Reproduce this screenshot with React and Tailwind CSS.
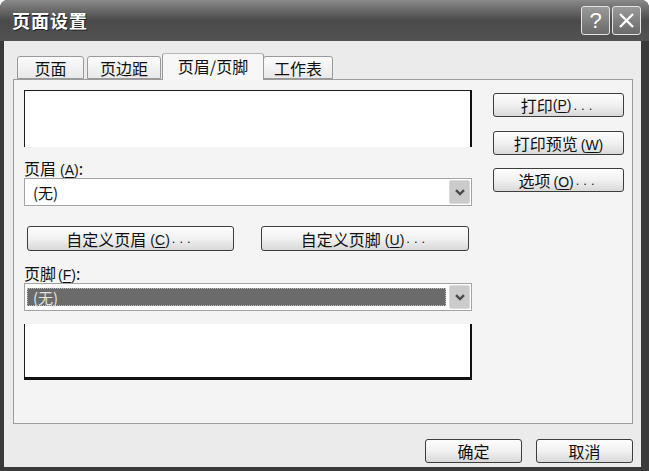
import React from 'react';

const cjk = "font-['Noto_Sans_CJK_SC','Noto_Sans',sans-serif]";

const Key = ({ k }) => (
  <span className="text-[14px] font-['Liberation_Sans',sans-serif]">
    (<span className="underline underline-offset-2">{k}</span>)
  </span>
);

const Dots = () => (
  <span className="text-[13px] tracking-[4px] font-['Liberation_Sans',sans-serif] ml-[2px]">...</span>
);

const XpButton = ({ className = '', children }) => (
  <div
    className={`flex items-center justify-center rounded-[3px] border border-[#3d3d3d] bg-gradient-to-b from-[#fdfdfd] via-[#f1f1f1] to-[#d9d9d9] text-[16px] leading-none text-[#111] ${className}`}
  >
    {children}
  </div>
);

const Chevron = () => (
  <svg width="10" height="7" viewBox="0 0 10 7">
    <path d="M1 1.2 L5 5 L9 1.2" fill="none" stroke="#4a4a4a" strokeWidth="2.4" />
  </svg>
);

const Combo = ({ selected }) => (
  <div className="flex items-center h-[28px] border border-[#a3a3a3] bg-white pl-[2px] pr-[1px]">
    {selected ? (
      <div className="flex-1 h-[18px] flex items-center pl-[5px] bg-[#6b6b6b] border border-dotted border-[#bdbdbd] text-[#e2e2e2] text-[15px] leading-none">
        (无)
      </div>
    ) : (
      <div className="flex-1 pl-[6px] text-[15px] leading-none text-[#111]">(无)</div>
    )}
    <div className="ml-[3px] w-[21px] h-[24px] rounded-[2px] bg-[#cbcbcb] border border-[#dadada] flex items-center justify-center">
      <Chevron />
    </div>
  </div>
);

const Tab = ({ label, width, active, className = '' }) => (
  <div
    className={`flex items-center justify-center rounded-t-[3px] border border-[#9a9a9a] text-[16px] leading-none text-[#111] ${
      active
        ? 'h-[27px] -mb-[1px] border-b-0 bg-[#f7f7f7] border-t-[#b5b5b5] pb-[2px]'
        : 'h-[23px] bg-gradient-to-b from-[#fbfbfb] to-[#e9e9e9]'
    } ${className}`}
    style={{ width }}
  >
    {label}
  </div>
);

const App = () => {
  return (
    <div className={`w-[649px] h-[471px] bg-white ${cjk}`}>
      <div className="w-full h-full flex flex-col rounded-t-[8px] overflow-hidden bg-[#3a3a3a]">
        {/* title bar */}
        <div className="h-[41px] flex items-center justify-between pl-[12px] pr-[8px] bg-gradient-to-b from-[#8a8a8a] via-[#4a4a4a] to-[#525252]">
          <span className="text-white text-[18px] font-bold tracking-[1px] [text-shadow:1px_1px_0_#222]">页面设置</span>
          <div className="flex gap-[2px]">
            <div className="w-[29px] h-[29px] rounded-[3px] border border-[#e4e4e4] bg-gradient-to-b from-[#9a9a9a] to-[#6a6a6a] flex items-center justify-center text-white text-[22px] font-['Liberation_Sans',sans-serif] leading-none">
              ?
            </div>
            <div className="w-[29px] h-[29px] rounded-[3px] border border-[#e4e4e4] bg-gradient-to-b from-[#9a9a9a] to-[#6a6a6a] flex items-center justify-center">
              <svg width="17" height="17" viewBox="0 0 17 17">
                <path d="M2 2 L15 15 M15 2 L2 15" stroke="white" strokeWidth="2.4" />
              </svg>
            </div>
          </div>
        </div>

        {/* body */}
        <div className="flex-1 ml-[4px] mr-[8px] mb-[4px] bg-[#ebebeb] pt-[12px] pl-[9px] pr-[8px] flex flex-col">
          <div className="relative z-10 flex items-end h-[26px] pl-[4px]">
            <Tab label="页面" width={67} />
            <Tab label="页边距" width={74} className="ml-[3px]" />
            <Tab label="页眉/页脚" width={102} active className="ml-[1px]" />
            <Tab label="工作表" width={70} className="-ml-[1px]" />
          </div>

          <div className="h-[345px] border border-[#9c9c9c] bg-[#f4f4f4] flex pl-[10px] pt-[10px]">
            {/* left column */}
            <div className="w-[448px] flex flex-col">
              <div className="h-[57px] bg-white border-t border-l border-[#1c1c1c] border-r-2 border-r-[#111]" />
              <div className="mt-[12px] h-[18px] flex items-center text-[16px] leading-none text-[#111]">
                页眉<span className="ml-[4px]"><Key k="A" /></span>:
              </div>
              <div className="mt-[1px]">
                <Combo />
              </div>
              <div className="mt-[20px] flex">
                <XpButton className="ml-[3px] w-[207px] h-[25px]">
                  自定义页眉<span className="ml-[4px]"><Key k="C" /></span>
                  <Dots />
                </XpButton>
                <XpButton className="ml-[27px] w-[208px] h-[25px]">
                  自定义页脚<span className="ml-[4px]"><Key k="U" /></span>
                  <Dots />
                </XpButton>
              </div>
              <div className="mt-[13px] h-[18px] flex items-center text-[16px] leading-none text-[#111]">
                页脚<span className="ml-[2px]"><Key k="F" /></span>:
              </div>
              <div className="mt-[1px]">
                <Combo selected />
              </div>
              <div className="mt-[13px] h-[56px] bg-white border-l border-[#1c1c1c] border-r-2 border-r-[#111] border-b-[3px] border-b-[#111]" />
            </div>

            {/* right column */}
            <div className="ml-[21px] w-[131px] pt-[3px] flex flex-col">
              <XpButton className="h-[24px]">
                打印<Key k="P" />
                <Dots />
              </XpButton>
              <XpButton className="h-[24px] mt-[14px]">
                打印预览<span className="ml-[3px]"><Key k="W" /></span>
              </XpButton>
              <XpButton className="h-[24px] mt-[13px]">
                选项<span className="ml-[3px]"><Key k="O" /></span>
                <Dots />
              </XpButton>
            </div>
          </div>

          <div className="mt-[15px] flex justify-end gap-[14px]">
            <XpButton className="w-[97px] h-[24px]">确定</XpButton>
            <XpButton className="w-[97px] h-[24px]">取消</XpButton>
          </div>
        </div>
      </div>
    </div>
  );
};

export default App;
